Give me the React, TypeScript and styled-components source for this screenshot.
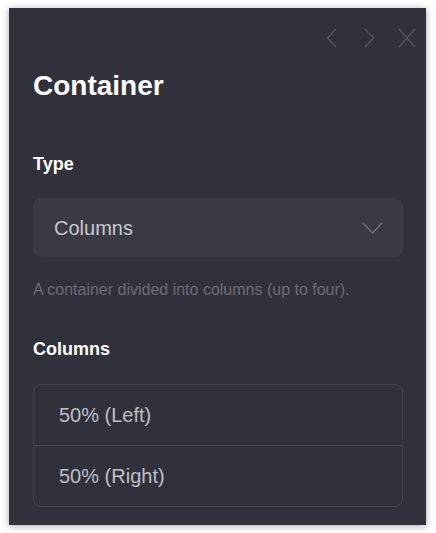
import React from 'react';
import styled, { createGlobalStyle } from 'styled-components';

const GlobalStyle = createGlobalStyle`
  html, body {
    margin: 0;
    padding: 0;
    background: #ffffff;
  }
  body {
    font-family: 'Liberation Sans', Arial, sans-serif;
  }
`;

const Page = styled.div`
  padding: 8px 10px 8px 9px;
`;

const Panel = styled.aside`
  box-sizing: border-box;
  width: 417px;
  height: 517px;
  background: #31313b;
  box-shadow: 0 1px 7px rgba(0, 0, 0, 0.35);
  padding: 0 23px 0 24px;
  display: flex;
  flex-direction: column;
`;

const Toolbar = styled.div`
  display: flex;
  justify-content: flex-end;
  margin: 11px -23px 0 0;
`;

const IconButton = styled.button`
  width: 38px;
  height: 38px;
  padding: 0;
  border: 0;
  background: transparent;
  color: #54545e;
  display: flex;
  align-items: center;
  justify-content: center;
  cursor: pointer;
`;

const Title = styled.h1`
  margin: 13px 0 0;
  font-size: 28px;
  line-height: 32px;
  font-weight: 700;
  color: #ffffff;
`;

interface LabelProps {
  gap: number;
}

const Label = styled.h2<LabelProps>`
  margin: ${props => props.gap}px 0 0;
  font-size: 18px;
  line-height: 22px;
  font-weight: 700;
  color: #ffffff;
`;

const Select = styled.div`
  margin-top: 23px;
  height: 59px;
  box-sizing: border-box;
  border-radius: 8px;
  background: #3a3a44;
  padding: 1px 20px 0 21px;
  display: flex;
  align-items: center;
  justify-content: space-between;
  font-size: 20px;
  color: #c9c9cf;
`;

const Hint = styled.p`
  margin: 23px 0 0;
  font-size: 16px;
  line-height: 20px;
  color: #6c6c76;
`;

const List = styled.ul`
  margin: 24px 0 0;
  padding: 0;
  list-style: none;
  border: 1px solid #43434d;
  border-radius: 8px;
`;

const Row = styled.li`
  height: 60px;
  padding-left: 25px;
  display: flex;
  align-items: center;
  font-size: 20px;
  color: #bfbfc5;
  & + & {
    border-top: 1px solid #43434d;
  }
`;

const ChevronLeft = () => (
  <svg width="11" height="20" viewBox="0 0 11 20" fill="none">
    <polyline points="10,1 1.5,10 10,19" stroke="currentColor" strokeWidth="1.4" />
  </svg>
);

const ChevronRight = () => (
  <svg width="11" height="20" viewBox="0 0 11 20" fill="none">
    <polyline points="1,1 9.5,10 1,19" stroke="currentColor" strokeWidth="1.4" />
  </svg>
);

const Close = () => (
  <svg width="18" height="20" viewBox="0 0 18 20" fill="none">
    <path d="M1 1 L17 19 M17 1 L1 19" stroke="currentColor" strokeWidth="1.4" />
  </svg>
);

const Caret = () => (
  <svg width="21" height="12" viewBox="0 0 21 12" fill="none">
    <polyline points="1,1 10.5,11 20,1" stroke="#74747e" strokeWidth="1.3" />
  </svg>
);

export default function App() {
  return (
    <>
      <GlobalStyle />
      <Page>
        <Panel>
          <Toolbar>
            <IconButton aria-label="Previous">
              <ChevronLeft />
            </IconButton>
            <IconButton aria-label="Next">
              <ChevronRight />
            </IconButton>
            <IconButton aria-label="Close">
              <Close />
            </IconButton>
          </Toolbar>
          <Title>Container</Title>
          <Label gap={51}>Type</Label>
          <Select>
            <span>Columns</span>
            <Caret />
          </Select>
          <Hint>A container divided into columns (up to four).</Hint>
          <Label gap={38}>Columns</Label>
          <List>
            <Row>50% (Left)</Row>
            <Row>50% (Right)</Row>
          </List>
        </Panel>
      </Page>
    </>
  );
}
